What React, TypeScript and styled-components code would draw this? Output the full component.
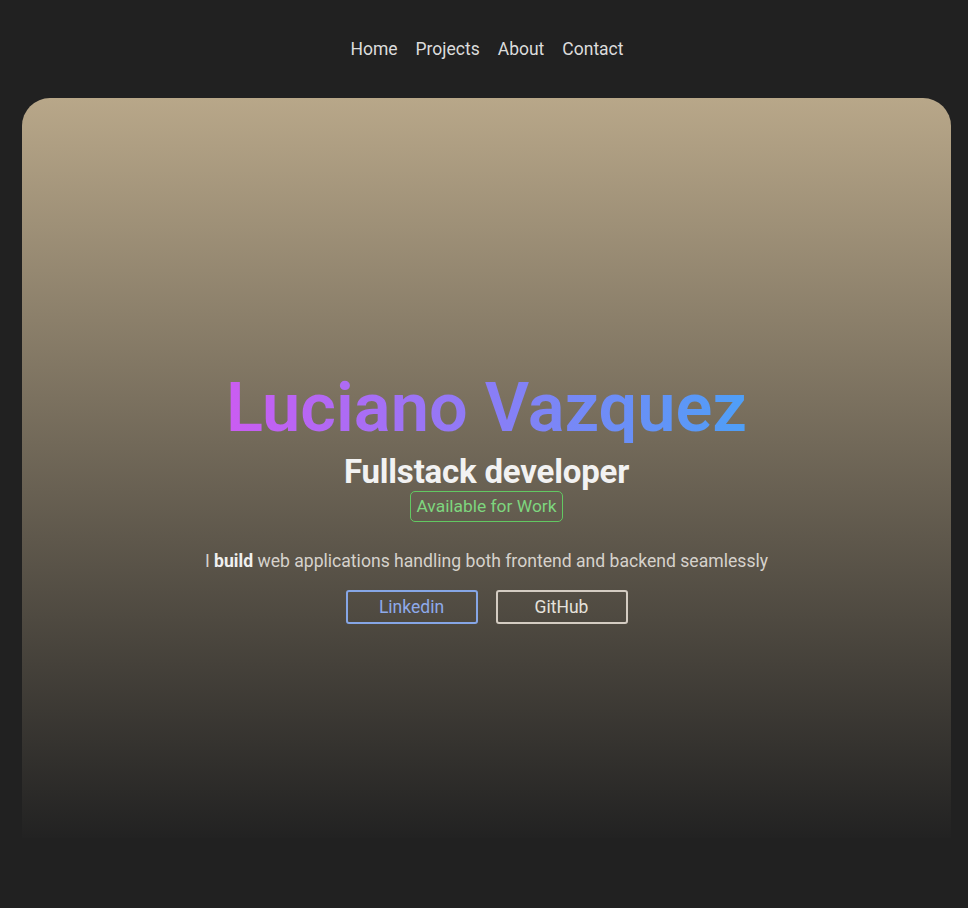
import React from "react";
import styled, { createGlobalStyle } from "styled-components";

const Global = createGlobalStyle`
  html, body { margin: 0; padding: 0; background: #212121; }
  body { font-family: Roboto, "Noto Sans", "Liberation Sans", sans-serif; color: #e0e0e0; }
  * { box-sizing: border-box; }
`;

const Page = styled.div`
  min-height: 908px;
  display: flex;
  flex-direction: column;
`;

const Nav = styled.nav`
  display: flex;
  justify-content: center;
  gap: 18px;
  padding: 37px 0 37px 6px;
`;

const NavLink = styled.a`
  font-size: 17.5px;
  line-height: 24px;
  color: #dcdcdc;
  text-decoration: none;
`;

const Hero = styled.section`
  margin: 0 17px 0 22px;
  height: 740px;
  border-radius: 28px 28px 0 0;
  background: linear-gradient(to bottom, #b8a789 0%, #222222 100%);
  display: flex;
  flex-direction: column;
  align-items: center;
  padding-top: 275px;
`;

const Name = styled.h1`
  margin: 0;
  font-size: 68.5px;
  line-height: 70px;
  font-weight: 600;
  background: linear-gradient(to right, #cb5cf2 0%, #8b7df6 50%, #4e9ff7 100%);
  -webkit-background-clip: text;
  background-clip: text;
  color: transparent;
`;

const Role = styled.h2`
  margin: 12px 0 0;
  font-size: 33px;
  line-height: 33px;
  font-weight: 700;
  color: #f2f2f2;
  letter-spacing: -0.2px;
`;

const Badge = styled.span`
  margin-top: 3px;
  display: inline-block;
  padding: 3px 5px;
  border: 1px solid #62c862;
  border-radius: 5px;
  color: #7ed67e;
  font-size: 17.4px;
  line-height: 23px;
`;

const Intro = styled.p`
  margin: 28px 0 0;
  font-size: 17.6px;
  line-height: 22px;
  color: #d6d2cc;
  b { color: #f0f0f0; font-weight: 700; }
`;

const Buttons = styled.div`
  margin-top: 18px;
  display: flex;
  gap: 18px;
`;

const Button = styled.a<{ $tone: "blue" | "light" }>`
  width: 132px;
  height: 34px;
  display: flex;
  align-items: center;
  justify-content: center;
  border: 2px solid ${(p) => (p.$tone === "blue" ? "#86a6e6" : "#d4ccc2")};
  border-radius: 3px;
  color: ${(p) => (p.$tone === "blue" ? "#8eaaea" : "#e6e2dc")};
  font-size: 17.5px;
  text-decoration: none;
`;

export default function App() {
  return (
    <Page>
      <Global />
      <Nav>
        <NavLink href="#">Home</NavLink>
        <NavLink href="#">Projects</NavLink>
        <NavLink href="#">About</NavLink>
        <NavLink href="#">Contact</NavLink>
      </Nav>
      <Hero>
        <Name>Luciano Vazquez</Name>
        <Role>Fullstack developer</Role>
        <Badge>Available for Work</Badge>
        <Intro>
          I <b>build</b> web applications handling both frontend and backend seamlessly
        </Intro>
        <Buttons>
          <Button href="#" $tone="blue">Linkedin</Button>
          <Button href="#" $tone="light">GitHub</Button>
        </Buttons>
      </Hero>
    </Page>
  );
}
